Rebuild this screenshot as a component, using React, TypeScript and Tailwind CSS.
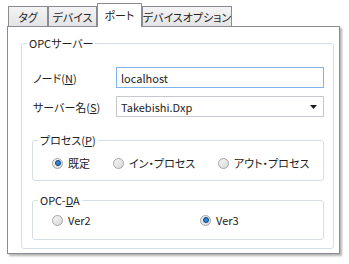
import React from "react";

const jp = "[font-family:'Noto_Sans_CJK_JP','Noto_Sans',sans-serif] [font-feature-settings:'palt']";

const Radio = ({ checked }: { checked?: boolean }) => (
  <span className="flex h-[11px] w-[11px] shrink-0 items-center justify-center rounded-full border border-[#a4a4a4] bg-gradient-to-br from-[#f6f6f6] to-[#d8d8d8]">
    {checked && (
      <span className="h-[6px] w-[6px] rounded-full border border-[#0c3f78] bg-[#2f8ad8]" />
    )}
  </span>
);

const Tab = ({ label, active }: { label: string; active?: boolean }) =>
  active ? (
    <div className="relative z-10 -mb-px -ml-px flex h-[24px] w-full items-center justify-center whitespace-nowrap border border-b-0 border-[#898c95] bg-white pb-[2px]">
      {label}
    </div>
  ) : (
    <div className="-ml-px flex h-[20px] w-full items-center justify-center whitespace-nowrap border border-b-0 border-[#898c95] bg-gradient-to-b from-[#f4f4f4] to-[#e4e4e4]">
      {label}
    </div>
  );

export default function App() {
  return (
    <div className={`h-[264px] w-[349px] overflow-hidden bg-white text-[11px] leading-[16px] text-[#222] ${jp}`}>
      {/* tab strip */}
      <div className="flex h-[26px] items-end pl-[9px]">
        <div className="w-[40px]">
          <Tab label="タグ" />
        </div>
        <div className="w-[49px]">
          <Tab label="デバイス" />
        </div>
        <div className="w-[45px]">
          <Tab label="ポート" active />
        </div>
        <div className="w-[90px]">
          <Tab label="デバイスオプション" />
        </div>
      </div>

      {/* panel */}
      <div className="ml-[7px] h-[228px] w-[333px] border border-[#898c95] bg-white pl-[13px] pt-[8px] shadow-[2px_2px_2px_rgba(0,0,0,0.3)]">
        <fieldset className="h-[214px] w-[313px] rounded-[3px] border border-[#d5dfe5]">
          <legend className="ml-[5px] px-[2px]">OPCサーバー</legend>
          <div className="pl-[10px] pr-[9px] pt-[16px]">
            <div className="flex h-[21px] items-center">
              <span className="w-[84px] pl-[1px]">
                ノード(<span className="underline">N</span>)
              </span>
              <div className="flex h-[21px] flex-1 items-center border border-[#7eb4ea] pl-[4px]">localhost</div>
            </div>
            <div className="mt-[8px] flex h-[21px] items-center">
              <span className="w-[84px] pl-[1px]">
                サーバー名(<span className="underline">S</span>)
              </span>
              <div className="flex h-[21px] flex-1 items-center justify-between border border-[#c5c8cf] pl-[4px] pr-[6px]">
                <span>Takebishi.Dxp</span>
                <svg width="7" height="4" viewBox="0 0 7 4">
                  <path d="M0 0h7L3.5 4z" fill="#1e1e1e" />
                </svg>
              </div>
            </div>

            <fieldset className="mt-[15px] h-[49px] rounded-[3px] border border-[#d5dfe5]">
              <legend className="ml-[5px] px-[2px]">
                プロセス(<span className="underline">P</span>)
              </legend>
              <div className="flex items-center pl-[19px] pt-[7px]">
                <label className="flex w-[61px] items-center gap-[5px]">
                  <Radio checked />
                  既定
                </label>
                <label className="flex w-[105px] items-center gap-[5px]">
                  <Radio />
                  イン・プロセス
                </label>
                <label className="flex items-center gap-[5px]">
                  <Radio />
                  アウト・プロセス
                </label>
              </div>
            </fieldset>

            <fieldset className="mt-[11px] h-[48px] rounded-[3px] border border-[#d5dfe5]">
              <legend className="ml-[5px] px-[2px]">
                OPC-<span className="underline">D</span>A
              </legend>
              <div className="flex items-center pl-[19px] pt-[4px]">
                <label className="flex w-[148px] items-center gap-[5px]">
                  <Radio />
                  Ver2
                </label>
                <label className="flex items-center gap-[5px]">
                  <Radio checked />
                  Ver3
                </label>
              </div>
            </fieldset>
          </div>
        </fieldset>
      </div>
    </div>
  );
}
